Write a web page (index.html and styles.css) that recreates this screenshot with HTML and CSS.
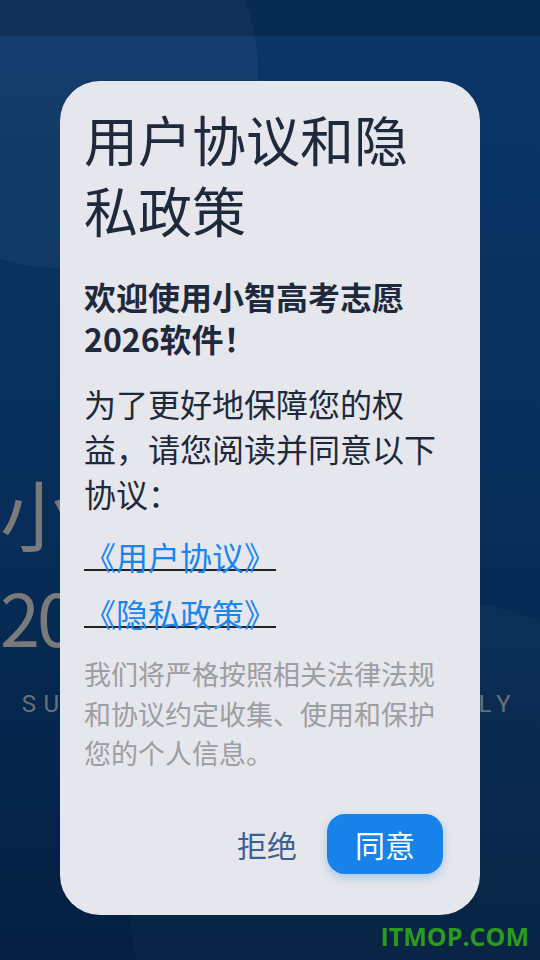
FILE: index.html
```html
<!DOCTYPE html>
<html lang="zh-CN">
<head>
  <meta charset="UTF-8" />
  <meta name="viewport" content="width=device-width, initial-scale=1.0"/>
  <title>小智高考志愿</title>
  <link rel="stylesheet" href="styles.css">
</head>
<body>
  <div class="screen">
    <div class="blob blob-top"></div>
    <div class="blob blob-bottom"></div>
    <div class="status-bar"></div>

    <main class="splash">
      <h1 class="splash-title">小智高考志愿</h1>
      <p class="splash-year">2026志愿</p>
      <p class="splash-tagline">SUCCESS IS CHOSEN WISELY</p>
    </main>

    <div class="mask">
      <div class="dialog">
        <h2 class="dialog-title">用户协议和隐私政策</h2>
        <p class="dialog-welcome">欢迎使用小智高考志愿2026软件！</p>
        <p class="dialog-text">为了更好地保障您的权益，请您阅读并同意以下协议：</p>
        <a class="dialog-link" href="#">《用户协议》</a>
        <a class="dialog-link" href="#">《隐私政策》</a>
        <p class="dialog-note">我们将严格按照相关法律法规和协议约定收集、使用和保护您的个人信息。</p>
        <div class="dialog-actions">
          <button class="btn-text">拒绝</button>
          <button class="btn-primary">同意</button>
        </div>
      </div>
    </div>

    <div class="watermark">ITMOP.COM</div>
  </div>
</body>
</html>
```

FILE: styles.css
```css
* { box-sizing: border-box; }
body { margin: 0; font-family: "Noto Sans CJK SC", "Noto Sans", sans-serif; }
.screen { position: relative; width: 540px; height: 960px; overflow: hidden; background: linear-gradient(180deg, #0a3668 0%, #072d58 55%, #041f40 100%); }

/* decorative shapes */
.blob { position: absolute; border-radius: 50%; }
.blob-top { left: -138px; top: -128px; width: 396px; height: 396px; background: rgba(255, 255, 255, 0.045); }
.blob-bottom { left: 130px; top: 600px; width: 600px; height: 600px; background: rgba(255, 255, 255, 0.025); }
.status-bar { position: relative; height: 36px; background: rgba(0, 0, 0, 0.2); }

/* splash behind the dialog */
.splash { position: relative; padding-top: 431px; color: #7a7a7a; }
.splash-title { margin: 0; font-size: 77px; line-height: 92px; font-weight: 400; white-space: nowrap; }
.splash-year { margin: 14px 0 0; font-size: 72px; line-height: 86px; letter-spacing: -3px; white-space: nowrap; }
.splash-tagline { margin: 31px 0 0; font-family: Roboto, sans-serif; font-size: 24px; line-height: 28px; letter-spacing: 7.5px; color: #6b7078; text-align: center; white-space: nowrap; }

/* dialog */
.mask { position: absolute; top: 36px; left: 0; right: 0; bottom: 0; display: flex; align-items: center; justify-content: center; }
.dialog { width: 420px; background: #e6e7ec; border-radius: 40px; padding: 22px 24px 41px; }
.dialog-title { margin: 0; font-size: 54px; line-height: 71px; font-weight: 400; color: #1e2a3b; }
.dialog-welcome { margin: 30px 0 0; font-size: 32px; line-height: 42px; font-weight: 700; color: #1e2a3b; }
.dialog-text { margin: 22px 0 0; font-size: 32px; line-height: 45px; color: #1e2a3b; }
.dialog-link { display: block; width: fit-content; margin-top: 18px; font-size: 32px; line-height: 45px; color: #1a86ec; text-decoration: underline; text-decoration-color: #222; text-decoration-thickness: 2px; text-underline-offset: -1px; }
.dialog-link + .dialog-link { margin-top: 12px; }
.dialog-note { margin: 18px 0 0; font-size: 27px; line-height: 39.5px; color: #9c9ea3; }

.dialog-actions { display: flex; justify-content: flex-end; align-items: center; gap: 15px; margin: 41px 13px 0 0; }
.dialog-actions button { font-family: inherit; font-size: 30px; border: none; cursor: pointer; height: 60px; }
.btn-text { background: none; color: #3e5f92; padding: 0 15px; }
.btn-primary { background: #1782ea; color: #fff; padding: 0 28px; border-radius: 18px; box-shadow: 0 4px 10px rgba(23, 130, 234, 0.3); }

.watermark { position: absolute; right: 11px; bottom: 11px; font-family: "Open Sans", sans-serif; font-weight: 700; font-size: 25px; line-height: 25px; color: #2b9b1c; }
```
